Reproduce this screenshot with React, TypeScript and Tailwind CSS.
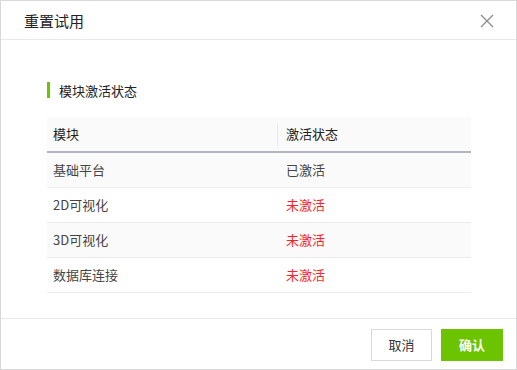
import React from "react";

const rows = [
  { name: "基础平台", status: "已激活", active: true },
  { name: "2D可视化", status: "未激活", active: false },
  { name: "3D可视化", status: "未激活", active: false },
  { name: "数据库连接", status: "未激活", active: false },
];

export default function App() {
  return (
    <div
      className="w-[517px] h-[370px] bg-white border border-[#d9d9d9] flex flex-col text-[#333]"
      style={{ fontFamily: '"Noto Sans CJK SC", "Noto Sans", sans-serif' }}
    >
      <div className="h-[39px] shrink-0 flex items-center justify-between pl-[23px] pr-[22px] border-b border-[#e8e8e8]">
        <span className="text-[15px] leading-none text-[#222]">重置试用</span>
        <svg width="14" height="14" viewBox="0 0 14 14" className="mt-[1px]">
          <path d="M1 1L13 13M13 1L1 13" stroke="#8c8c8c" strokeWidth="1.3" fill="none" />
        </svg>
      </div>
      <div className="flex-1 px-[46px] pt-[42px]">
        <div className="flex items-center h-[16px]">
          <div className="w-[3px] h-[16px] bg-[#6cc400]" />
          <span className="ml-[9px] text-[13px] leading-none text-[#222]">模块激活状态</span>
        </div>
        <div className="mt-[19px] text-[13px] w-[424px]">
          <div className="h-[36px] flex items-center bg-[#fafafa] border-b-2 border-[#b3b6ba] text-[#222]">
            <div className="w-[231px] pl-[6px] relative h-full flex items-center">
              模块
              <div className="absolute right-0 top-[7px] h-[22px] w-px bg-[#e8e8e8]" />
            </div>
            <div className="pl-[8px]">激活状态</div>
          </div>
          {rows.map((r, i) => (
            <div
              key={r.name}
              className={`h-[35px] flex items-center border-b border-[#ececec] ${
                i % 2 === 0 ? "bg-[#fafafa]" : "bg-white"
              }`}
            >
              <div className="w-[231px] pl-[6px] text-[#444]">{r.name}</div>
              <div className={`pl-[8px] ${r.active ? "text-[#444]" : "text-[#ff1f1f]"}`}>{r.status}</div>
            </div>
          ))}
        </div>
      </div>
      <div className="h-[51px] shrink-0 border-t border-[#e8e8e8] flex items-start justify-end gap-[9px] pr-[13px] pt-[10px]">
        <button className="w-[61px] h-[32px] border border-[#d9d9d9] bg-white text-[13px] text-[#333]">
          取消
        </button>
        <button className="w-[62px] h-[32px] bg-[#6cc400] text-white text-[13px] font-bold">确认</button>
      </div>
    </div>
  );
}
